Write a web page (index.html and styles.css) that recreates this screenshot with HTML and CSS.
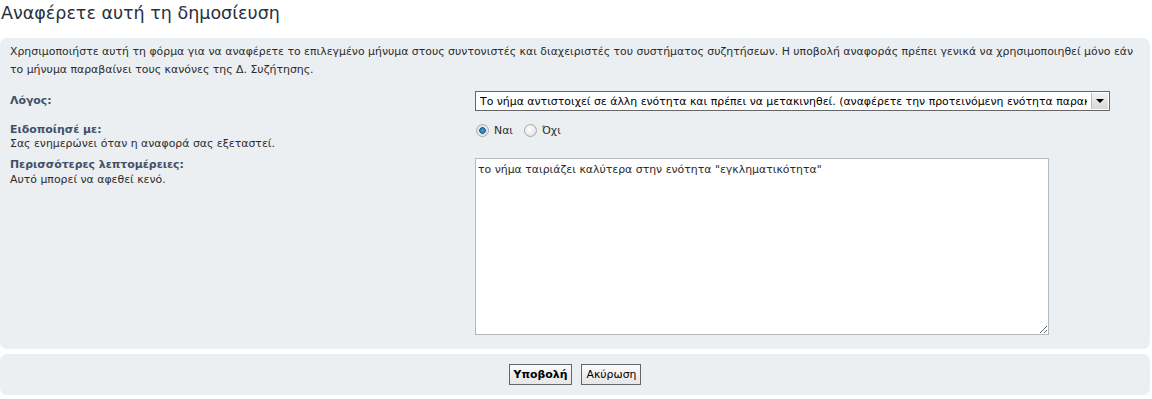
FILE: index.html
```html
<!DOCTYPE html>
<html lang="el">
<head>
  <meta charset="UTF-8">
  <title>Αναφέρετε αυτή τη δημοσίευση</title>
  <link rel="stylesheet" href="styles.css">
</head>
<body>
  <h2 class="page-title">Αναφέρετε αυτή τη δημοσίευση</h2>

  <form class="report-form">
    <div class="panel">
      <p class="intro">Χρησιμοποιήστε αυτή τη φόρμα για να αναφέρετε το επιλεγμένο μήνυμα στους συντονιστές και διαχειριστές του συστήματος συζητήσεων. Η υποβολή αναφοράς πρέπει γενικά να χρησιμοποιηθεί μόνο εάν το μήνυμα παραβαίνει τους κανόνες της Δ. Συζήτησης.</p>

      <div class="row row-reason">
        <div class="label"><strong>Λόγος:</strong></div>
        <div class="field">
          <div class="select-wrap">
            <select class="reason-select">
              <option>Το νήμα αντιστοιχεί σε άλλη ενότητα και πρέπει να μετακινηθεί. (αναφέρετε την προτεινόμενη ενότητα παρακάτω)</option>
            </select>
            <span class="select-arrow"></span>
          </div>
        </div>
      </div>

      <div class="row row-notify">
        <div class="label">
          <strong>Ειδοποίησέ με:</strong>
          <span class="hint">Σας ενημερώνει όταν η αναφορά σας εξεταστεί.</span>
        </div>
        <div class="field radios">
          <label class="radio"><input type="radio" name="notify" checked> Ναι</label>
          <label class="radio"><input type="radio" name="notify"> Όχι</label>
        </div>
      </div>

      <div class="row row-details">
        <div class="label">
          <strong>Περισσότερες λεπτομέρειες:</strong>
          <span class="hint">Αυτό μπορεί να αφεθεί κενό.</span>
        </div>
        <div class="field">
          <textarea class="details">το νήμα ταιριάζει καλύτερα στην ενότητα "εγκληματικότητα"</textarea>
        </div>
      </div>
    </div>

    <div class="panel buttons">
      <button type="submit" class="btn btn-main">Υποβολή</button>
      <button type="button" class="btn">Ακύρωση</button>
    </div>
  </form>
</body>
</html>
```

FILE: styles.css
```css
body {
  font-family: "DejaVu Sans", Verdana, sans-serif;
  font-size: 10.9px;
  color: #2b2b2b;
  background: #fff;
  margin: 0;
  padding: 0;
}
.page-title {
  font-family: "DejaVu Sans", Verdana, sans-serif;
  font-weight: normal;
  font-size: 17.5px;
  color: #28313f;
  margin: 0;
  padding: 2px 0 0 1px;
  height: 36px;
  line-height: 22px;
}
.panel {
  background-color: #ebeff2;
  border-radius: 7px;
  width: 1150px;
  box-sizing: border-box;
  padding: 5px 10px 14px;
}
.intro {
  margin: 0 0 12px;
  line-height: 18px;
}
.row {
  display: flex;
  align-items: flex-start;
}
.label {
  width: 465px;
  flex: none;
  line-height: 14px;
}
.label strong {
  display: block;
  color: #425067;
}
.hint {
  display: block;
}
.row-reason .label {
  padding-top: 3px;
}
.row-notify {
  margin-top: 12px;
}
.row-details {
  margin-top: 7px;
}
.row-details .hint {
  margin-top: 1px;
}
.select-wrap {
  position: relative;
  width: 635px;
  height: 20px;
}
.reason-select {
  -webkit-appearance: none;
  appearance: none;
  width: 100%;
  height: 20px;
  border: 1px solid #666;
  background: #fff;
  font-family: "DejaVu Sans", Verdana, sans-serif;
  font-size: 10.9px;
  color: #000;
  padding: 0 22px 0 4px;
  border-radius: 0;
  outline: none;
}
.select-arrow {
  position: absolute;
  right: 2px;
  top: 2px;
  width: 16px;
  height: 16px;
  background: linear-gradient(#f2f2f2, #d8d8d8);
  border-left: 1px solid #bbb;
}
.select-arrow::after {
  content: "";
  position: absolute;
  left: 4px;
  top: 6px;
  border-left: 4px solid transparent;
  border-right: 4px solid transparent;
  border-top: 4px solid #000;
}
.radios {
  display: flex;
  gap: 11px;
  padding-top: 1px;
}
.radio {
  display: flex;
  align-items: center;
  gap: 5px;
}
.radio input {
  -webkit-appearance: none;
  appearance: none;
  width: 13px;
  height: 13px;
  margin: 0;
  border-radius: 50%;
  border: 1px solid #a9a9a9;
  background: radial-gradient(circle at 40% 40%, #fff, #dcdcdc);
  box-sizing: border-box;
}
.radio input:checked {
  background: radial-gradient(circle at 50% 50%, #5fa3d8 0, #1b5f96 3px, #dcdcdc 3.5px, #f4f4f4 6px);
}
.radios .radio:first-child {
  margin-left: 1px;
}
.details {
  width: 574px;
  height: 177px;
  box-sizing: border-box;
  border: 1px solid #b4bac0;
  background: #fff;
  font-family: "DejaVu Sans", Verdana, sans-serif;
  font-size: 10.9px;
  color: #2b2b2b;
  padding: 4px 2px;
  margin: 0;
  display: block;
  resize: both;
  outline: none;
}
.buttons {
  margin-top: 5px;
  padding: 10px 10px;
  height: 41px;
  display: flex;
  justify-content: center;
  gap: 9px;
}
.btn {
  font-family: "DejaVu Sans", Verdana, sans-serif;
  font-size: 10.9px;
  color: #000;
  height: 21px;
  padding: 0 4px;
  border: 1px solid #666;
  background: linear-gradient(#fafafa, #e6e6e6);
  border-radius: 0;
  cursor: pointer;
}
.btn-main {
  font-weight: bold;
}
```
